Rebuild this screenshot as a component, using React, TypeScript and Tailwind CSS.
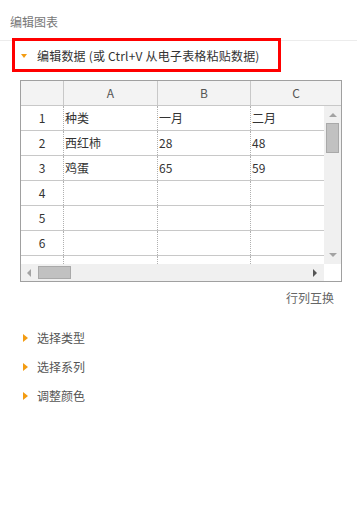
const font = { fontFamily: '"Noto Sans CJK SC", "Noto Sans", sans-serif' };

const rows: string[][] = [
  ["种类", "一月", "二月"],
  ["西红柿", "28", "48"],
  ["鸡蛋", "65", "59"],
  ["", "", ""],
  ["", "", ""],
  ["", "", ""],
  ["", "", ""],
];

function RightArrow() {
  return <span className="inline-block w-0 h-0 border-y-[4px] border-y-transparent border-l-[5px] border-l-[#f39c12]" />;
}

function Section({ label }: { label: string }) {
  return (
    <div className="flex items-center h-[29px] pl-[23px]">
      <RightArrow />
      <span className="ml-[9px] text-[12px] leading-[29px] text-[#555]">{label}</span>
    </div>
  );
}

function DataGrid() {
  return (
    <div className="ml-[20px] w-[322px] border border-[#a0a0a0] bg-white text-[12px] text-[#333]">
      {/* header */}
      <div className="flex h-[25px] bg-[#f3f3f3] border-b border-[#c8c8c8] text-[#555]">
        <div className="w-[43px] border-r border-[#c8c8c8]" />
        <div className="w-[94px] border-r border-[#c8c8c8] flex items-center justify-center">A</div>
        <div className="w-[93px] border-r border-[#c8c8c8] flex items-center justify-center">B</div>
        <div className="flex-1 flex items-center justify-center">C</div>
      </div>
      {/* body, the 7th row is only partly visible */}
      <div className="flex h-[158px]">
        <div className="w-[303px] overflow-hidden">
          {rows.map((r, i) => (
            <div key={i} className="flex h-[25px] border-b border-[#c8c8c8] leading-[24px]">
              <div className="w-[43px] shrink-0 border-r border-dotted border-[#b0b0b0] text-center">{i < 6 ? i + 1 : ""}</div>
              <div className="w-[94px] shrink-0 border-r border-dotted border-[#b0b0b0] pl-[1px]">{r[0]}</div>
              <div className="w-[93px] shrink-0 border-r border-dotted border-[#b0b0b0] pl-[1px]">{r[1]}</div>
              <div className="flex-1 pl-[1px]">{r[2]}</div>
            </div>
          ))}
        </div>
        <div className="w-[17px] bg-[#f0f0f0] flex flex-col items-center">
          <span className="mt-[7px] w-0 h-0 border-x-[4px] border-x-transparent border-b-[4px] border-b-[#a3a3a3]" />
          <div className="mt-[6px] w-[13px] h-[30px] bg-[#c1c1c1] border border-[#a9a9a9]" />
          <div className="flex-1" />
          <span className="mb-[7px] w-0 h-0 border-x-[4px] border-x-transparent border-t-[4px] border-t-[#a3a3a3]" />
        </div>
      </div>
      {/* horizontal scrollbar */}
      <div className="flex h-[17px]">
        <div className="w-[303px] bg-[#f0f0f0] flex items-center">
          <span className="ml-[6px] w-0 h-0 border-y-[4px] border-y-transparent border-r-[4px] border-r-[#a3a3a3]" />
          <div className="ml-[7px] w-[33px] h-[13px] bg-[#c1c1c1] border border-[#a9a9a9]" />
          <div className="flex-1" />
          <span className="mr-[7px] w-0 h-0 border-y-[4px] border-y-transparent border-l-[4px] border-l-[#555]" />
        </div>
        <div className="flex-1 bg-white" />
      </div>
    </div>
  );
}

export default function App() {
  return (
    <div className="w-[357px] h-[514px] bg-white overflow-hidden" style={font}>
      <div className="h-[41px] pl-[10px] pt-[4px] flex items-center border-b border-[#ececec] text-[12px] text-[#777]">
        编辑图表
      </div>
      <div className="ml-[15px] w-[263px] h-[28px] pt-[1px] pl-[6px] flex items-center outline outline-[3px] outline-[#ff0000]">
        <span className="w-0 h-0 border-x-[3px] border-x-transparent border-t-[4px] border-t-[#f39c12]" />
        <span className="ml-[10px] text-[12px] tracking-[0.2px] text-[#333]">编辑数据 (或 Ctrl+V 从电子表格粘贴数据)</span>
      </div>
      <div className="mt-[11px]">
        <DataGrid />
      </div>
      <div className="ml-[20px] w-[322px] mt-[7px] h-[18px] leading-[18px] pr-[8px] text-right text-[12px] text-[#666]">
        行列互换
      </div>
      <div className="mt-[16px]">
        <Section label="选择类型" />
        <Section label="选择系列" />
        <Section label="调整颜色" />
      </div>
    </div>
  );
}
